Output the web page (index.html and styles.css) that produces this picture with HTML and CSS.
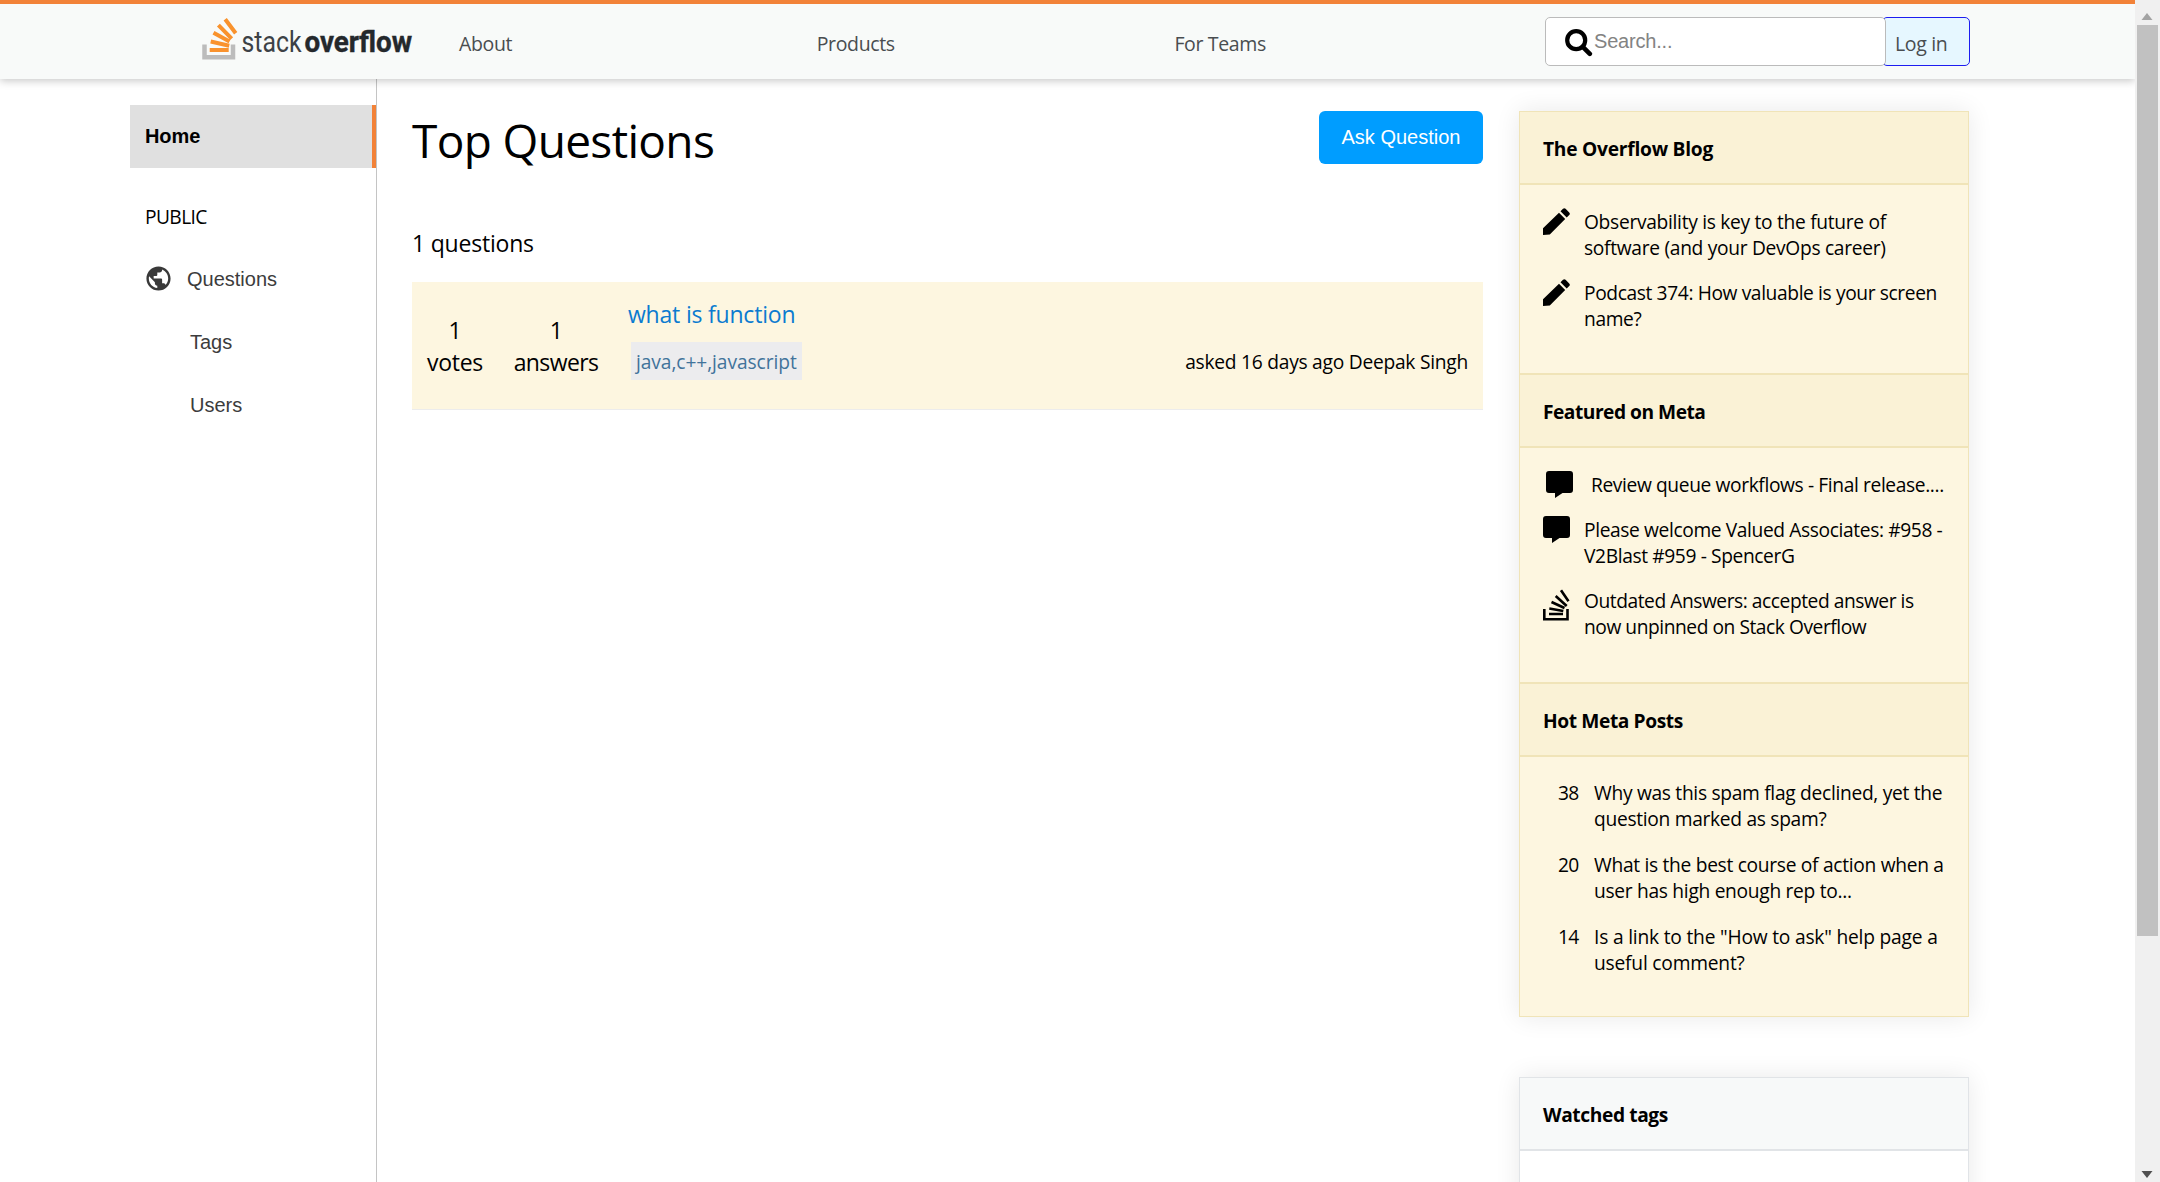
FILE: index.html
```html
<!DOCTYPE html>
<html lang="en">
<head>
<meta charset="utf-8">
<title>Stack Overflow</title>
<link rel="stylesheet" href="styles.css">
</head>
<body>
<div class="page">
  <header class="header">
    <svg class="logo" width="214" height="48" viewBox="0 0 214 48">
      <path d="M4.500 25.500v12.700h28.500V25.500" fill="none" stroke="#bcbcbc" stroke-width="4.500"/>
      <path d="M11 31.300h19M12 22.800l18.500 4.200M14.800 14l16 8.800M19.700 6.500l13.300 13.500M26.500 .6l10.500 14" transform="translate(-1.300 -.3)" fill="none" stroke="#f9922d" stroke-width="4"/>
      <text class="logo-thin" x="41.500" y="33" textLength="60" lengthAdjust="spacingAndGlyphs">stack</text>
      <text class="logo-bold" x="104.500" y="33" textLength="107.500" lengthAdjust="spacingAndGlyphs">overflow</text>
    </svg>
    <nav class="nav">
      <a>About</a><a>Products</a><a>For Teams</a>
    </nav>
    <div class="tools">
      <div class="search">
        <svg width="28" height="28" viewBox="0 0 28 28" fill="none" stroke="#000"><circle cx="11.200" cy="11.200" r="9" stroke-width="4.200"/><path d="M17.800 17.800l7 7" stroke-width="4.600" stroke-linecap="round"/></svg>
        <span>Search...</span>
      </div>
      <a class="login">Log in</a>
    </div>
  </header>
  <div class="content">
    <aside class="sidebar">
      <a class="home">Home</a>
      <div class="public">PUBLIC</div>
      <a class="side-link"><svg width="29" height="29" viewBox="0 0 24 24" fill="#393939"><path d="M12 2C6.480 2 2 6.480 2 12s4.480 10 10 10 10-4.480 10-10S17.520 2 12 2zm-1 17.930c-3.950-.49-7-3.850-7-7.930 0-.62.08-1.210.21-1.790L9 15v1c0 1.100.9 2 2 2v1.930zm6.900-2.540c-.26-.81-1-1.390-1.900-1.390h-1v-3c0-.55-.45-1-1-1H8v-2h2c.55 0 1-.45 1-1V7h2c1.100 0 2-.9 2-2v-.41c2.930 1.190 5 4.060 5 7.410 0 2.080-.8 3.970-2.100 5.390z"/></svg>Questions</a>
      <a class="side-link sub">Tags</a>
      <a class="side-link sub">Users</a>
    </aside>
    <main class="main">
      <div class="main-top">
        <h1>Top Questions</h1>
        <button class="ask">Ask Question</button>
      </div>
      <p class="count">1 questions</p>
      <article class="question">
        <div class="stat votes"><span>1</span><span>votes</span></div>
        <div class="stat answers"><span>1</span><span>answers</span></div>
        <div class="summary">
          <a class="q-title">what is function</a>
          <div class="q-row">
            <span class="tag">java,c++,javascript</span>
            <span class="asked">asked 16 days ago Deepak Singh</span>
          </div>
        </div>
      </article>
    </main>
    <aside class="right">
      <section class="panel yellow">
        <h3>The Overflow Blog</h3>
        <div class="body blog">
          <div class="item"><svg class="icon" viewBox="0 0 27 27"><path d="M0 27v-6.700L16 4.700l6.200 6.200L6.800 26.500zM17.500 3.300L20 .8q1.300-1.200 2.600 0l3.600 3.700q1.300 1.300 0 2.600l-2.500 2.400z"/></svg><p>Observability is key to the future of<br>software (and your DevOps career)</p></div>
          <div class="item"><svg class="icon" viewBox="0 0 27 27"><path d="M0 27v-6.700L16 4.700l6.200 6.200L6.800 26.500zM17.500 3.300L20 .8q1.300-1.200 2.600 0l3.600 3.700q1.300 1.300 0 2.600l-2.500 2.400z"/></svg><p class="tight">Podcast 374: How valuable is your screen<br>name?</p></div>
        </div>
        <h3 class="featured-title">Featured on Meta</h3>
        <div class="body featured">
          <div class="item indent"><svg class="icon" viewBox="0 0 27 27"><path d="M3 0h21q3 0 3 3v16q0 3-3 3h-7.500L9 27v-5H3q-3 0-3-3V3q0-3 3-3z"/></svg><p class="tight">Review queue workflows - Final release....</p></div>
          <div class="item"><svg class="icon" viewBox="0 0 27 27"><path d="M3 0h21q3 0 3 3v16q0 3-3 3h-7.500L9 27v-5H3q-3 0-3-3V3q0-3 3-3z"/></svg><p class="tight">Please welcome Valued Associates: #958 -<br>V2Blast #959 - SpencerG</p></div>
          <div class="item"><svg class="icon tall" viewBox="0 0 27 32" fill="none" stroke="#000" stroke-width="2.600"><path d="M1.300 20v10.200h23.200V20M6 25h14M6.300 19.500l14 2.500M8.500 13l13 6M12.700 7l11 10M18 1.200l7.500 11"/></svg><p class="tighter">Outdated Answers: accepted answer is<br>now unpinned on Stack Overflow</p></div>
        </div>
        <h3 class="hot-title">Hot Meta Posts</h3>
        <div class="body hot">
          <div class="item"><b>38</b><p>Why was this spam flag declined, yet the<br>question marked as spam?</p></div>
          <div class="item"><b>20</b><p>What is the best course of action when a<br>user has high enough rep to...</p></div>
          <div class="item"><b>14</b><p class="loose">Is a link to the "How to ask" help page a<br>useful comment?</p></div>
        </div>
      </section>
      <section class="panel gray">
        <h3>Watched tags</h3>
        <div class="body"></div>
      </section>
    </aside>
  </div>
</div>
<div class="scrollbar">
  <svg width="25" height="25" viewBox="0 0 25 25"><path d="M6.500 20l5.500-7 5.500 7z" fill="#a3a3a3"/></svg>
  <div class="thumb"></div>
  <svg width="25" height="25" viewBox="0 0 25 25"><path d="M6.500 14h11l-5.500 7z" fill="#505050"/></svg>
</div>
</body>
</html>
```
FILE: styles.css
```css
* { box-sizing: border-box; }
body {
  margin: 0;
  height: 1182px;
  overflow: hidden;
  display: grid;
  grid-template-columns: 2135px 25px;
  background: #fff;
  color: #000;
  font: 19.2px/26px "Open Sans", "Noto Sans", sans-serif;
  letter-spacing: -0.3px;
}
h1, h3, p { margin: 0; }

.page { height: 1182px; overflow: hidden; display: flex; flex-direction: column; }

.header {
  position: relative;
  z-index: 2;
  flex: none;
  height: 79px;
  padding-left: 200px;
  display: flex;
  align-items: flex-start;
  border-top: 4px solid #f28238;
  background: #f8faf9;
  box-shadow: 0 2px 8px rgba(0, 0, 0, .22);
}
.logo { flex: none; margin-top: 15px; overflow: visible; }
.logo text { font-family: Roboto, sans-serif; font-size: 29px; letter-spacing: 0; }
.logo-thin { fill: #3c4146; font-weight: 400; }
.logo-bold { fill: #24282c; font-weight: 700; stroke: #24282c; stroke-width: .4px; }
.nav { display: flex; padding: 26px 0 0 45px; width: 1131px; }
.nav a { width: 357.700px; }
.nav a, .login { font-size: 19.500px; line-height: 27px; font-weight: 500; color: #494d50; letter-spacing: -.35px; }
.tools { display: flex; margin-top: 13px; }
.search {
  position: relative;
  z-index: 1;
  width: 341px;
  height: 49px;
  display: flex;
  gap: 1px;
  padding: 10px 0 0 19px;
  border: 1px solid #bbb;
  border-radius: 5px;
  background: #fff;
}
.search svg { margin-top: 1px; }
.search span { font: 20px/26px "Liberation Sans", sans-serif; color: #838383; letter-spacing: -.2px; }
.login {
  width: 88px;
  height: 49px;
  margin-left: -4px;
  padding: 12px 0 0 12px;
  border: 1px solid #1d1df0;
  border-radius: 5px;
  background: #e6f7ff;
}

.content { flex: 1; display: flex; padding-left: 130px; }
.sidebar {
  width: 247px;
  height: 1103px;
  padding-top: 26px;
  border-right: 1px solid #c4c4c4;
  font-family: "Liberation Sans", sans-serif;
  font-size: 20px;
}
.home {
  display: block;
  height: 63px;
  padding: 18px 0 0 15px;
  font-weight: 700;
  letter-spacing: -.1px;
  border-right: 4px solid #f28238;
  background: #e0e0e0;
}
.public { margin-top: 36px; padding-left: 15px; font: 19.200px/26px "Open Sans", sans-serif; letter-spacing: -.6px; }
.side-link { display: flex; height: 63px; align-items: center; padding-left: 14px; gap: 14px; color: #3c3c3c; letter-spacing: 0; }
.public + .side-link { margin-top: 17px; }
.sub { padding-left: 60px; }

.main { width: 1106px; padding: 32px 0 0 35px; }
.main-top { display: flex; justify-content: space-between; align-items: flex-start; }
h1 { font-size: 46px; line-height: 58px; font-weight: 400; letter-spacing: -.65px; }
.ask {
  width: 164px;
  height: 53px;
  padding: 0 0 1px;
  border: 0;
  border-radius: 6px;
  background: #009dff;
  color: #fff;
  font: 20px "Liberation Sans", sans-serif;
}
.count { margin-top: 58px; font-size: 23px; line-height: 32px; letter-spacing: -.2px; }
.question {
  height: 128px;
  margin-top: 23px;
  padding: 15px 15px 0;
  display: flex;
  border-bottom: 1px solid #ececec;
  background: #fdf6e0;
}
.stat { display: flex; flex-direction: column; align-items: center; padding-top: 17px; font-size: 23px; line-height: 32px; letter-spacing: -.3px; }
.votes { width: 56px; }
.answers { width: 84px; margin-left: 31px; letter-spacing: -.6px; }
.summary { flex: 1; margin-left: 30px; }
.q-title { display: block; font-size: 23px; line-height: 34px; letter-spacing: -.2px; color: #0b7bd0; }
.q-row { display: flex; justify-content: space-between; margin: 11px 0 0 3px; }
.tag { width: 171px; height: 38px; padding: 7px 0 0 5px; background: #ececee; color: #41739b; letter-spacing: -.08px; white-space: nowrap; }
.asked { padding-top: 7px; letter-spacing: -.25px; }

.right { width: 450px; margin-left: 36px; padding-top: 32px; }
.panel { border: 1px solid; box-shadow: 0 0 24px rgba(0, 0, 0, .09); }
.panel h3 { height: 73px; padding: 24px 0 0 23px; font-size: 19.200px; font-weight: 700; letter-spacing: -.25px; border-bottom: 2px solid; }
.panel .featured-title { letter-spacing: -.5px; }
.panel .hot-title { letter-spacing: -.4px; }
.yellow { height: 906px; background: #fdf6e0; }
.yellow, .yellow h3, .yellow .body { border-color: #f0e4b8; }
.yellow h3 { background: #faf2d6; }
.gray { height: 300px; margin-top: 60px; background: #fff; }
.gray, .gray h3 { border-color: #e1e4e7; }
.gray h3 { background: #f7f9f9; letter-spacing: -.4px; }
.body { padding: 24px 0 0 23px; display: flex; flex-direction: column; gap: 19px; }
.blog { height: 190px; border-bottom: 2px solid; }
.featured { height: 236px; border-bottom: 2px solid; }
.hot { padding-top: 23px; padding-left: 38px; gap: 20px; }
.item { display: flex; }
.item p { white-space: nowrap; }
.item .tight { letter-spacing: -.38px; }
.item .tighter { letter-spacing: -.45px; }
.item .loose { letter-spacing: -.2px; }
.icon { flex: none; width: 27px; height: 27px; margin: -1px 14px 0 0; }
.icon.tall { height: 32px; margin-top: 1px; }
.indent { height: 26px; }
.indent .icon { margin-left: 3px; margin-right: 18px; }
.hot b { width: 36px; font-weight: 400; letter-spacing: -.6px; }

.scrollbar { height: 1182px; display: flex; flex-direction: column; justify-content: space-between; background: #f0f0f0; }
.thumb { width: 21px; height: 911px; margin: 0 2px 221px; background: #c1c1c1; }
```
